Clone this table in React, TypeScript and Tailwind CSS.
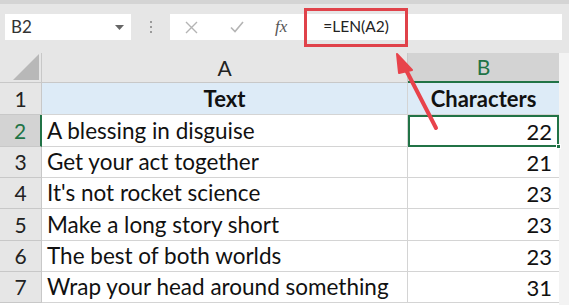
import React from "react";

const rows = [
  { n: 2, t: "A blessing in disguise", v: 22, h: "h-[32px]" },
  { n: 3, t: "Get your act together", v: 21, h: "h-[31px]" },
  { n: 4, t: "It's not rocket science", v: 23, h: "h-[31px]" },
  { n: 5, t: "Make a long story short", v: 23, h: "h-[32px]" },
  { n: 6, t: "The best of both worlds", v: 23, h: "h-[31px]" },
  { n: 7, t: "Wrap your head around something", v: 31, h: "h-[31px]" },
];

export default function App() {
  return (
    <div
      className="relative w-[569px] h-[305px] overflow-hidden bg-[#e6e6e6]"
      style={{ fontFamily: "Lato, 'Noto Sans', sans-serif" }}
    >
      <div className="h-[4px] bg-[#d4d4d4]" />
      {/* formula row */}
      <div className="flex items-center mt-[10px] h-[26px]">
        <div className="ml-[5px] w-[126px] h-full bg-white flex items-center justify-between pl-[6px] pr-[7px]">
          <span className="text-[17px] text-[#333]">B2</span>
          <svg width="9" height="5" viewBox="0 0 9 5"><path d="M0 0 L9 0 L4.5 5 Z" fill="#666" /></svg>
        </div>
        <div className="w-[39px] flex justify-center">
          <div className="flex flex-col gap-[3px]">
            <div className="w-[2px] h-[2px] bg-[#9a9a9a]" />
            <div className="w-[2px] h-[2px] bg-[#9a9a9a]" />
            <div className="w-[2px] h-[2px] bg-[#9a9a9a]" />
          </div>
        </div>
        <div className="w-[392px] h-full bg-white flex items-center">
          <svg className="ml-[15px]" width="13" height="13" viewBox="0 0 13 13">
            <path d="M1 1 L12 12 M12 1 L1 12" stroke="#b4b4b4" strokeWidth="1.4" />
          </svg>
          <svg className="ml-[32px]" width="14" height="12" viewBox="0 0 14 12">
            <path d="M1 6.5 L5 10.5 L13 1" stroke="#b4b4b4" strokeWidth="1.6" fill="none" />
          </svg>
          <span
            className="ml-[31px] text-[17px] italic text-[#555]"
            style={{ fontFamily: "'Liberation Serif', serif" }}
          >
            fx
          </span>
          <span className="ml-[36px] text-[15.5px] text-[#222]">=LEN(A2)</span>
        </div>
      </div>

      {/* grid */}
      <div className="mt-[13px] flex">
        <div className="w-[559px] bg-white">
          {/* column headers */}
          <div className="flex h-[30px] bg-[#e6e6e6]">
            <div className="w-[42px] h-full border-r border-b border-[#c8c8c8] relative">
              <svg className="absolute right-[2px] bottom-[2px]" width="26" height="26" viewBox="0 0 26 26">
                <path d="M26 0 L26 26 L0 26 Z" fill="#b8b8b8" />
              </svg>
            </div>
            <div className="w-[366px] h-full border-r border-b border-[#c8c8c8] flex items-center justify-center text-[21px] text-[#222]">
              A
            </div>
            <div className="w-[151px] h-full bg-[#d3d3d3] border-b-2 border-[#217346] flex items-center justify-center text-[21px] text-[#217346]">
              B
            </div>
          </div>
          {/* row 1 */}
          <div className="flex h-[32px]">
            <div className="w-[42px] bg-[#e6e6e6] border-r border-b border-[#c8c8c8] flex items-center justify-center text-[21px] text-[#222]">
              1
            </div>
            <div className="w-[366px] bg-[#ddebf7] border-r border-b border-[#d4d4d4] flex items-center justify-center text-[22px] font-bold text-[#111]">
              Text
            </div>
            <div className="w-[151px] bg-[#ddebf7] border-b border-[#d4d4d4] flex items-center justify-center text-[22px] font-bold text-[#111]">
              Characters
            </div>
          </div>
          {rows.map((r) => (
            <div key={r.n} className={`flex ${r.h}`}>
              <div
                className={
                  r.n === 2
                    ? "w-[42px] bg-[#d3d3d3] border-r-2 border-r-[#217346] border-b border-b-[#c8c8c8] flex items-center justify-center text-[21px] text-[#217346]"
                    : "w-[42px] bg-[#e6e6e6] border-r border-b border-[#c8c8c8] flex items-center justify-center text-[21px] text-[#222]"
                }
              >
                {r.n}
              </div>
              <div className="w-[366px] border-r border-b border-[#d4d4d4] flex items-center pl-[5px] text-[22.5px] text-[#111] whitespace-nowrap">
                {r.t}
              </div>
              <div
                className={
                  r.n === 2
                    ? "relative w-[151px] border-2 border-[#217346] flex items-center justify-end pr-[5px] text-[22px] text-[#111]"
                    : "w-[151px] border-b border-[#d4d4d4] flex items-center justify-end pr-[7px] text-[22px] text-[#111]"
                }
              >
                {r.v}
                {r.n === 2 && (
                  <div className="absolute right-[-4px] bottom-[-4px] w-[5px] h-[5px] bg-[#217346] border border-white" />
                )}
              </div>
            </div>
          ))}
        </div>
        <div className="flex-1 bg-[#f3f3f3] h-[300px]" />
      </div>

      {/* red annotation box */}
      <div className="absolute left-[304px] top-[8px] w-[104px] h-[39px] border-[3px] border-[#e0424a]" />
      {/* red arrow */}
      <svg className="absolute left-0 top-0" width="569" height="305" viewBox="0 0 569 305">
        <line x1="436" y1="128" x2="404" y2="66" stroke="#e8434b" strokeWidth="4" strokeLinecap="round" />
        <path d="M397 54 L412 70 L399 73 Z" fill="#e8434b" stroke="#e8434b" strokeWidth="2" strokeLinejoin="round" />
      </svg>
    </div>
  );
}
